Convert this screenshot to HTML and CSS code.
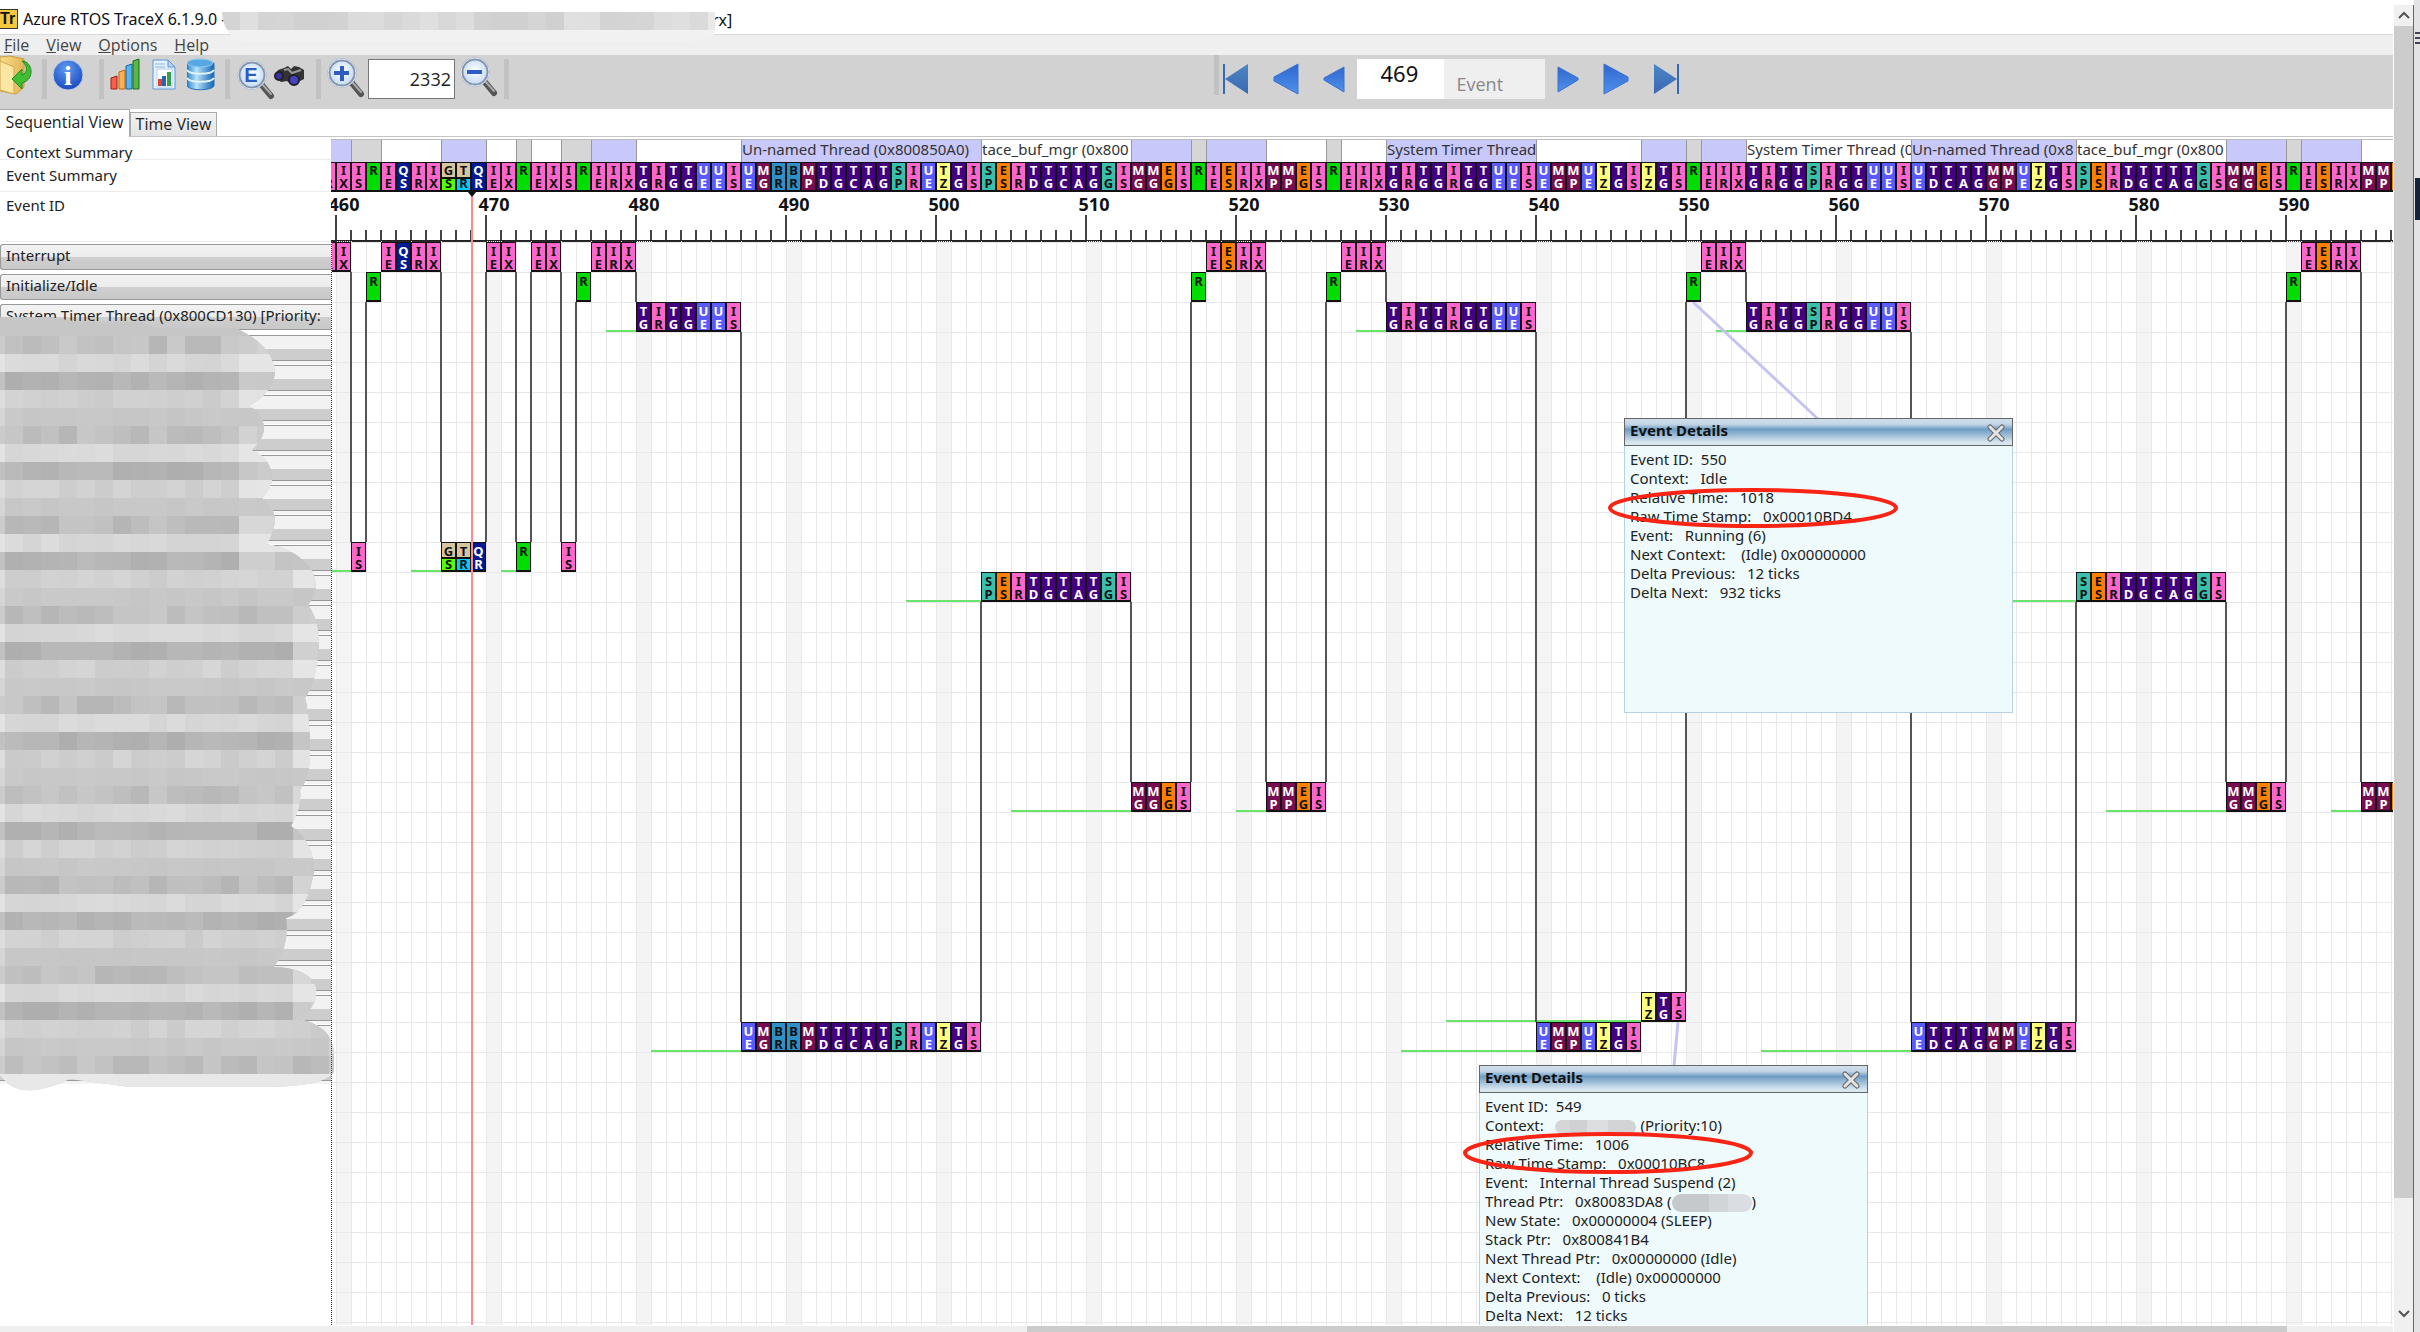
FILE: index.html
```html
<!DOCTYPE html>
<html lang="en">
<head>
<meta charset="utf-8">
<title>Azure RTOS TraceX 6.1.9.0</title>
<link rel="stylesheet" href="styles.css">
</head>
<body>
<svg class="defs" aria-hidden="true">
  <defs>
    <linearGradient id="blue" x1="0" y1="0" x2="0" y2="1"><stop offset="0" stop-color="#2f66cf"/><stop offset="1" stop-color="#4f92ea"/></linearGradient>
    <linearGradient id="steel" x1="0" y1="0" x2="0" y2="1"><stop offset="0" stop-color="#4a86c4"/><stop offset="1" stop-color="#3c68b4"/></linearGradient>
    <linearGradient id="db" x1="0" x2="1"><stop offset="0" stop-color="#2f86cf"/><stop offset=".35" stop-color="#b4e2fb"/><stop offset="1" stop-color="#1464b4"/></linearGradient>
    <linearGradient id="folder" x1="0" x2="1"><stop offset="0" stop-color="#f8dc8c"/><stop offset="1" stop-color="#e2b552"/></linearGradient>
    <radialGradient id="lens" cx=".5" cy=".45" r=".6"><stop offset="0" stop-color="#fff"/><stop offset="1" stop-color="#bcd6f4"/></radialGradient>
    <radialGradient id="ball" cx=".45" cy=".3" r=".75"><stop offset="0" stop-color="#5f9cf0"/><stop offset="1" stop-color="#1444bc"/></radialGradient>
    <symbol id="glass" viewBox="0 0 40 42">
      <path d="M25 25 L35 37" stroke="#555" stroke-width="6" stroke-linecap="round"/>
      <path d="M26 25 L35 35" stroke="#aaa" stroke-width="2" stroke-linecap="round"/>
      <circle cx="16" cy="16" r="13" fill="url(#lens)" stroke="#8494ac" stroke-width="3"/>
      <circle cx="16" cy="16" r="14" fill="none" stroke="#dfe8f4" stroke-width="1"/>
    </symbol>
    <symbol id="cross" viewBox="0 0 18 18">
      <path d="M3 3 L15 15 M15 3 L3 15" stroke="#666" stroke-width="5" stroke-linecap="round"/>
      <path d="M3 3 L15 15 M15 3 L3 15" stroke="#e4e4e4" stroke-width="3" stroke-linecap="round"/>
    </symbol>
  </defs>
</svg>
<div class="window">
  <main class="app">
    <header class="titlebar">
      <span class="logo">Tr</span>
      <span>Azure RTOS TraceX 6.1.9.0 -</span>
      <svg class="title-mask" width="493" height="30" id="titleMask"></svg>
      <span class="title-end">rx]</span>
    </header>
    <nav class="menu">
      <a href="#"><u>F</u>ile</a><a href="#"><u>V</u>iew</a><a href="#"><u>O</u>ptions</a><a href="#"><u>H</u>elp</a>
    </nav>
    <div class="toolbar">
      <div class="tools">
        <button class="tool w36"><svg width="36" height="42" viewBox="0 0 36 42"><path d="M0 2l10-1 14 3v28l-8 7-16-3z" fill="url(#folder)" stroke="#c79a3c"/><path d="M0 6l14 6v27L0 35z" fill="#fbe6a4" stroke="#d2a848"/><path d="M22 6C32 6 36 24 22 28v6L12 24l10-10v6c6-2 6-9 0-14z" fill="#3fbe34" stroke="#1f8a20"/></svg></button>
        <i class="sep"></i>
        <button class="tool w40"><svg width="32" height="42" viewBox="0 0 32 42"><circle cx="15" cy="20" r="15" fill="url(#ball)" stroke="#bccdf0"/><text x="15" y="30" text-anchor="middle" class="info-i">i</text></svg></button>
        <i class="sep"></i>
        <button class="tool w36"><svg width="32" height="42" viewBox="0 0 32 42"><path d="M1 23l6-2v13H1z" fill="#f4604c" stroke="#a81c14"/><path d="M9 17l6-2v19H9z" fill="#f8b050" stroke="#b86a10"/><path d="M16 11l6-2v25h-6z" fill="#5cb4ec" stroke="#1464a4"/><path d="M23 6l6-2v30h-6z" fill="#58b848" stroke="#1a6a1c"/></svg></button>
        <button class="tool w29"><svg width="24" height="42" viewBox="0 0 24 42"><path d="M1 5h15l7 7v22H1z" fill="#e4f0fc" stroke="#5c96dc"/><path d="M16 5v7h7z" fill="#b4d2f4" stroke="#5c96dc"/><path d="M3 9h10M3 12h10" stroke="#8cb8ec"/><path d="M5 14h15v18H5z" fill="#fff" stroke="#b4d0f0"/><path d="M6 24h4v7H6z" fill="#e04430"/><path d="M10 21h4v10h-4z" fill="#2464b4"/><path d="M15 17h4v14h-4z" fill="#3c9c48"/></svg></button>
        <button class="tool w32"><svg width="28" height="42" viewBox="0 0 28 42"><path d="M0 8v23c3 5 24 5 27 0V8z" fill="url(#db)" stroke="#2872b8"/><ellipse cx="13" cy="8" rx="13" ry="4" fill="#58a8e4" stroke="#8ccaf4"/><path d="M0 15c3 5 24 5 27 0M0 23c3 5 24 5 27 0" fill="none" stroke="#e0f2fc" stroke-width="2"/></svg></button>
        <i class="sep"></i>
        <button class="tool w32"><svg width="40" height="46" viewBox="0 0 40 46"><use href="#glass" y="4" width="40" height="42"/><text x="15" y="27" text-anchor="middle" class="lens-e">E</text></svg></button>
        <button class="tool w36"><svg width="32" height="42" viewBox="0 0 32 42"><path d="M10 13l4-2 3 3 3-3 5 1 5 3v9l-6 3-4 4-7-5-6 1-6-5 3-7z" fill="#333"/><path d="M10 15l4-1 4 4 9-3" stroke="#999" stroke-width="2" fill="none"/><circle cx="5" cy="21" r="4" fill="#3a30a8" stroke="#222" stroke-width="2"/><circle cx="20" cy="25" r="5" fill="#4a40c8" stroke="#222" stroke-width="2"/></svg></button>
        <i class="sep"></i>
        <button class="tool w35"><svg width="40" height="44" viewBox="0 0 40 44"><use href="#glass" y="2" x="-1" width="40" height="42"/><path d="M13 11h4v5h5v4h-5v6h-4v-6H7v-4h6z" fill="#2c5cc4"/></svg></button>
        <input class="zoom-box" value="2332" aria-label="2332">
        <button class="tool w37"><svg width="40" height="42" viewBox="0 0 40 42"><use href="#glass" y="1" x="-2" width="40" height="42"/><path d="M6 15h15v4H6z" fill="#2c5cc4"/></svg></button>
        <i class="sep"></i>
      </div>
      <div class="seek">
        <i class="sep"></i>
        <div class="arrows">
          <button><svg width="27" height="32" viewBox="0 0 27 32"><path d="M2 1v30" stroke="#3468b8" stroke-width="2"/><path d="M26 1v30L3 16z" fill="url(#steel)"/></svg></button>
          <button><svg width="26" height="32" viewBox="0 0 26 32"><path d="M25 1v30L1 18v-4z" fill="url(#blue)" stroke="#3c70d0"/></svg></button>
          <button><svg width="22" height="32" viewBox="0 0 22 32"><path d="M21 4v25L1 17v-2z" fill="url(#blue)" stroke="#3c70d0"/></svg></button>
        </div>
        <input class="event-box" id="ev" value="469"><label class="event-label" for="ev">Event</label>
        <div class="arrows">
          <button><svg width="22" height="32" viewBox="0 0 22 32"><path d="M1 4v25l20-12v-2z" fill="url(#blue)" stroke="#3c70d0"/></svg></button>
          <button><svg width="26" height="32" viewBox="0 0 26 32"><path d="M1 1v30l24-13v-4z" fill="url(#blue)" stroke="#3c70d0"/></svg></button>
          <button><svg width="27" height="32" viewBox="0 0 27 32"><path d="M25 1v30" stroke="#3468b8" stroke-width="2"/><path d="M1 1v30l23-15z" fill="url(#steel)"/></svg></button>
        </div>
      </div>
    </div>
    <div class="tabs"><button class="tab active">Sequential View</button><button class="tab">Time View</button></div>
    <div class="view">
      <aside class="side">
        <div class="cap cap-context">Context Summary</div>
        <div class="cap cap-events">Event Summary</div>
        <div class="cap cap-id">Event ID</div>
        <button class="thread">Interrupt</button>
        <button class="thread">Initialize/Idle</button>
        <button class="thread">System Timer Thread (0x800CD130) [Priority:</button>
        <div class="hidden-threads"></div>
        <svg class="mask" id="sideMask" width="340" height="790"></svg>
      </aside>
      <section class="trace">
        <div class="contexts" id="contexts"></div>
        <div class="events" id="summary"></div>
        <div class="ruler" id="ruler"></div>
        <div class="plot">
          <svg class="links" id="links"></svg>
          <div class="runs" id="runs"></div>
          <article class="popup first">
            <header><h2>Event Details</h2><button><svg width="18" height="18"><use href="#cross"/></svg></button></header>
            <p>Event ID:  550</p><p>Context:   Idle</p><p>Relative Time:   1018</p><p>Raw Time Stamp:   0x00010BD4</p><p>Event:   Running (6)</p><p>Next Context:    (Idle) 0x00000000</p><p>Delta Previous:   12 ticks</p><p>Delta Next:   932 ticks</p>
          </article>
          <article class="popup second">
            <header><h2>Event Details</h2><button><svg width="18" height="18"><use href="#cross"/></svg></button></header>
            <p>Event ID:  549</p><p>Context:   <i class="pill"></i> (Priority:10)</p><p>Relative Time:   1006</p><p>Raw Time Stamp:   0x00010BC8</p><p>Event:   Internal Thread Suspend (2)</p><p>Thread Ptr:   0x80083DA8 (<i class="pill tall"></i>)</p><p>New State:   0x00000004 (SLEEP)</p><p>Stack Ptr:   0x800841B4</p><p>Next Thread Ptr:   0x00000000 (Idle)</p><p>Next Context:    (Idle) 0x00000000</p><p>Delta Previous:   0 ticks</p><p>Delta Next:   12 ticks</p>
          </article>
          <svg class="rings"><ellipse cx="1422" cy="266" rx="143" ry="18"/><ellipse cx="1277" cy="911" rx="143" ry="19"/></svg>
        </div>
        <div class="cursor"></div>
      </section>
    </div>
    <div class="hscroll"><i></i></div>
  </main>
  <div class="vscroll">
    <svg width="19" height="21" viewBox="0 0 19 21"><path d="M5 13l5-5 5 5" fill="none" stroke="#555" stroke-width="2"/></svg>
    <i></i>
    <svg width="19" height="21" viewBox="0 0 19 21"><path d="M5 8l5 5 5-5" fill="none" stroke="#555" stroke-width="2"/></svg>
  </div>
  <div class="edge"><i></i><i></i><i></i><b></b></div>
</div>
<script src="trace.js"></script>
</body>
</html>
```
FILE: styles.css
```css
* { box-sizing: border-box; }
body { margin: 0; overflow: hidden; background: #fff; color: #222; font: 16px/20px "Open Sans", "Noto Sans", sans-serif; }
button { border: 0; padding: 0; margin: 0; background: none; color: inherit; font: inherit; }
svg { display: block; }
.defs { position: absolute; width: 0; height: 0; }
.window { display: grid; grid-template-columns: minmax(0, 1fr) 20px 6px; height: 100vh; }
.app { display: flex; flex-direction: column; min-width: 0; min-height: 0; padding-right: 1px; }

.titlebar { position: relative; display: flex; align-items: center; height: 34px; padding-top: 4px; color: #111; white-space: pre; font-family: "Noto Sans", sans-serif; flex: none; }
.logo { width: 18px; height: 20px; margin-right: 5px; overflow: hidden; background: #f4c83c; border: 1px solid #333; border-left: 0; color: #111; font: bold 16px/18px "Liberation Sans", sans-serif; }
.title-mask { position: absolute; left: 222px; top: 12px; z-index: 1; }
.title-end { position: absolute; left: 712px; top: 10px; }
.menu { display: flex; gap: 17px; height: 21px; padding-left: 4px; background: #efefef; border-top: 1px solid #d8d8d8; flex: none; }
.menu a { color: #444; text-decoration: none; }
.toolbar { display: flex; height: 54px; background: #d2d2d2; flex: none; }
.tools { display: flex; gap: 6px; width: calc(50% + 17px); }
.tool { height: 46px; overflow: visible; display: flex; align-items: flex-start; flex: none; }
.tool svg { flex: none; }
.info-i { fill: #fff; font: bold 28px "Liberation Serif", serif; }
.lens-e { fill: #2c5cc4; font: bold 20px "Liberation Sans", sans-serif; }
.w29 { width: 29px; } .w32 { width: 32px; } .w35 { width: 35px; } .w36 { width: 36px; } .w37 { width: 37px; } .w40 { width: 40px; }
.sep { width: 5px; height: 40px; margin-top: 4px; background: #c2c2c2; flex: none; }
.zoom-box { width: 87px; height: 40px; margin-top: 4px; padding: 0 3px; border: 1px solid #777; text-align: right; font: 18px "Open Sans", sans-serif; color: #222; flex: none; }
.seek { display: flex; }
.seek .sep { margin: 0 3px 0 0; }
.arrows { display: flex; gap: 24px; padding-top: 8px; align-items: flex-start; }
.event-box { width: 87px; height: 40px; margin: 4px 0 0 12px; padding: 0 0 12px 24px; border: 0; font: 22px "Noto Sans", sans-serif; color: #111; }
.event-label { width: 101px; height: 40px; margin: 4px 12px 0 0; padding: 13px 0 0 13px; background: #efefef; color: #888; font-size: 18px; line-height: 24px; }

.tabs { display: flex; align-items: flex-end; height: 28px; border-bottom: 1px solid #c4c4c4; flex: none; }
.tab { width: 87px; height: 24px; padding-bottom: 2px; background: linear-gradient(#f2f2f2, #e4e4e4); border: 1px solid #aaa; border-bottom: 0; }
.tab.active { width: 130px; height: 28px; margin-bottom: -1px; padding-bottom: 4px; background: #fff; border-left: 0; }

.view { display: flex; flex: 1; min-height: 0; overflow: hidden; font: 15px/20px "Noto Sans", sans-serif; }
.side { position: relative; width: 331px; flex: none; }
.cap { padding-left: 6px; border-bottom: 1px solid #ececec; }
.cap-context { height: 23px; padding-top: 5px; }
.cap-events { height: 32px; padding-top: 5px; }
.cap-id { height: 50px; padding-top: 3px; }
.thread { display: block; width: 331px; height: 26px; margin: 2px 0 4px; padding: 0 0 4px 5px; text-align: left; white-space: nowrap; border: 1px solid #999; border-right: 0; border-radius: 3px 0 0 3px; background: linear-gradient(#f2f2f2, #ececec 50%, #cfcfcf 52%, #c8c8c8); line-height: 20px; }
.hidden-threads { height: 750px; background: repeating-linear-gradient(#fff 0 1px, #999 1px 2px, #f2f2f2 2px 15px, #cdcdcd 15px 26px, #999 26px 27px, #f4f4f4 27px 30px); }
.mask { position: absolute; left: 0; top: 179px; }

.trace { position: relative; display: flex; flex-direction: column; flex: 1; min-width: 0; overflow: hidden; }
.contexts { display: flex; height: 23px; margin: 2px 0 0 -10px; flex: none; border-top: 1px solid #bbb; }
.contexts span { border-left: 1px solid #999; white-space: nowrap; line-height: 19px; color: #333; flex: none; overflow: hidden; }
.lav { background: #c8c8fa; } .gray { background: #d6d6d7; } .none { background: #fff; }
.events { display: flex; height: 30px; margin-left: -10px; flex: none; }
.ev { display: flex; flex-direction: column; width: 15px; height: 30px; border: 1px solid #111; border-width: 1px 1px 2px 1px; background: #ff66cc; color: #111; font: bold 13px/13px "Noto Sans", sans-serif; text-align: center; flex: none; padding-top: 1px; }
.runs .ev { padding-top: 2px; }
.k-green { background: #00dd00; } .k-navy { background: #001a94; color: #fff; } .k-purple { background: #430080; color: #fff; }
.k-blue { background: #5a5aff; color: #fff; } .k-maroon { background: #780c50; color: #fff; } .k-sky { background: #2f90c8; }
.k-teal { background: #3abfac; } .k-orange { background: #ff8000; } .k-yellow { background: #ffff80; }
.k-lime { background: linear-gradient(#d6c6a0 14px, #111 14px 16px, #55ff00 16px); } .k-cyan { background: linear-gradient(#d6c6a0 14px, #111 14px 16px, #00ccff 16px); }
.ruler { display: flex; height: 50px; flex: none; color: #111; font: bold 18px/24px "Noto Sans", sans-serif;
  background: linear-gradient(#222 0 0) 0 100% / 100% 2px no-repeat,
    linear-gradient(90deg, #444 2px, transparent 2px) 4px 100% / 15px 12px repeat-x,
    linear-gradient(90deg, #444 2px, transparent 2px) 4px 100% / 150px 27px repeat-x; }
.ruler span { width: 150px; flex: none; text-align: center; }
.ruler span:first-child { margin-left: -62px; }
.plot { position: relative; flex: 1; min-height: 0; border-left: 1px dotted #333; border-top: 1px dotted #333; overflow: hidden; margin-top: -1px;
  background: linear-gradient(transparent 29px, #e8e8eb 29px) 0 1px / 100% 30px,
    linear-gradient(90deg, #e8e8eb 1px, transparent 1px) 4px 0 / 15px 100%,
    linear-gradient(90deg, #f4f4f4 15px, transparent 15px) 4px 0 / 150px 100%; }
.links, .rings { position: absolute; left: -1px; top: 0; width: 100%; height: 100%; overflow: visible; fill: none; }
.rings { stroke: #fa2414; stroke-width: 4px; }
.runs { position: relative; display: grid; grid-template-columns: repeat(139, 15px); grid-auto-rows: 30px; margin-left: -11px; }
.cursor { position: absolute; left: 140px; top: 55px; bottom: 0; width: 2px; background: #ff8c8c; }
.cursor::before { content: ""; position: absolute; left: -4px; top: -1px; border: 5px solid transparent; border-top: 6px solid #111; border-bottom: 0; }
.popup { position: absolute; width: 389px; padding: 0 5px; background: #eefafc; border: 1px solid #b8d0e4; color: #222; }
.popup.first { left: 1292px; top: 176px; height: 295px; }
.popup.second { left: 1147px; top: 823px; height: 295px; }
.popup header { display: flex; justify-content: space-between; height: 28px; margin: -1px -6px 4px; padding: 1px 7px 0 5px; border: 1px solid #666; background: linear-gradient(#cfdeea, #c4d6e6 20%, #6e9cc4 40%, #d8e6f0 90%); }
.popup h2 { margin: 0; font: bold 15px/20px "Noto Sans", sans-serif; color: #111; }
.popup button { margin-top: 4px; align-self: flex-start; }
.popup p { margin: 0; line-height: 19px; white-space: pre; }
.pill { display: inline-block; width: 81px; height: 14px; border-radius: 7px; vertical-align: middle; background: linear-gradient(90deg, #d4d6d8 18%, #cfd1d3 18% 40%, #dcdee0 40% 65%, #d2d4d6 65%); }
.pill.tall { width: 80px; height: 18px; margin: -2px 0; border-radius: 9px; background: linear-gradient(90deg, #c6c9cb 46%, #d2d5d8 46% 70%, #dadde1 70%); }

.hscroll { display: grid; grid-template-columns: 1027fr 1260fr 106fr; height: 6px; background: #efefef; flex: none; margin-top: 1px; }
.hscroll i { grid-column: 2; background: #ccc; }
.vscroll { display: flex; flex-direction: column; margin-top: 5px; background: #f0f0f0; border-right: 1px solid #666; }
.vscroll i { height: calc(88% + 4px); background: #ccc; }
.vscroll svg:last-child { margin-top: auto; margin-bottom: 8px; }
.edge { padding: 32px 0 0 1px; background: #e3e3e6; }
.edge i { display: block; height: 2px; margin-bottom: 3px; background: #445; }
.edge b { display: block; height: 42px; margin-top: 134px; background: #12233a; }
```
FILE: trace.js
```js
const FIRST = 459, CELL = 15, ROW = 30, X0 = -10;
// Runs of consecutive events: [row, event codes]
const RUNS = [
  [0, 'IR IX'], [10, 'IS'], [1, 'R'], [0, 'IE QS IR IX'], [10, 'GS TR QR'], [0, 'IE IX'], [10, 'R'], [0, 'IE IX'],
  [10, 'IS'], [1, 'R'], [0, 'IE IR IX'], [2, 'TG IR TG TG UE UE IS'],
  [26, 'UE MG BR BR MP TD TG TC TA TG SP IR UE TZ TG IS'], [11, 'SP ES IR TD TG TC TA TG SG IS'],
  [18, 'MG MG EG IS'], [1, 'R'], [0, 'IE ES IR IX'], [18, 'MP MP EG IS'], [1, 'R'], [0, 'IE IR IX'],
  [2, 'TG IR TG TG IR TG TG UE UE IS'], [26, 'UE MG MP UE TZ TG IS'], [25, 'TZ TG IS'], [1, 'R'], [0, 'IE IR IX'],
  [2, 'TG IR TG TG SP IR TG TG UE UE IS'], [26, 'UE TD TC TA TG MG MP UE TZ TG IS'],
  [11, 'SP ES IR TD TG TC TA TG SG IS'], [18, 'MG MG EG IS'], [1, 'R'], [0, 'IE ES IR IX'], [18, 'MP MP EG']
];
// Ready periods: [row, first event, last event]
const READY = [[10, 459, 461], [10, 465, 467], [10, 471, 472], [2, 478, 480], [26, 481, 487], [11, 498, 503], [18, 505, 513],
  [18, 520, 522], [2, 528, 530], [26, 531, 540], [25, 534, 547], [2, 552, 554], [26, 555, 565], [11, 569, 576],
  [18, 578, 586], [18, 593, 595]];
const CONTEXTS = [[2, 'lav'], [2, 'gray'], [4, 'none'], [3, 'lav'], [2, 'none'], [1, 'gray'], [2, 'none'], [2, 'gray'], [3, 'lav'],
  [7, 'none'], [16, 'lav', 'Un-named Thread (0x800850A0)'], [10, 'none', 'tace_buf_mgr (0x800'], [4, 'lav'], [1, 'gray'],
  [4, 'lav'], [4, 'none'], [1, 'gray'], [3, 'none'], [10, 'lav', 'System Timer Thread'], [7, 'none'], [3, 'lav'], [1, 'gray'],
  [3, 'lav'], [11, 'none', 'System Timer Thread (0'], [11, 'lav', 'Un-named Thread (0x8'], [10, 'none', 'tace_buf_mgr (0x800'],
  [4, 'lav'], [1, 'gray'], [4, 'lav'], [3, 'none']];
const KIND = { R: 'green', QS: 'navy', QR: 'navy', GS: 'lime', TR: 'cyan', TZ: 'yellow', BR: 'sky', SP: 'teal', SG: 'teal',
  ES: 'orange', EG: 'orange', UE: 'blue', MG: 'maroon', MP: 'maroon', TG: 'purple', TD: 'purple', TC: 'purple', TA: 'purple' };
const byId = id => document.getElementById(id);
const xOf = n => X0 + (n - FIRST) * CELL;

function cell(code) {
  const el = document.createElement('div');
  el.className = 'ev k-' + (KIND[code] || 'pink');
  for (const ch of code) {
    const s = document.createElement('span');
    s.textContent = ch;
    el.append(s);
  }
  return el;
}

let n = FIRST, prev = null, lines = '';
for (const [row, a, b] of READY)
  lines += `<path d="M${xOf(a)} ${row * ROW + 29}H${xOf(b)}" stroke="#6be46b" stroke-width="2"/>`;
for (const [row, codes] of RUNS) {
  if (prev !== null) {
    const top = Math.min(prev, row) + 1, bottom = Math.max(prev, row);
    if (bottom > top) lines += `<path d="M${xOf(n)} ${top * ROW}V${bottom * ROW}" stroke="#555" stroke-width="2"/>`;
  }
  prev = row;
  for (const code of codes.split(' ')) {
    byId('summary').append(cell(code));
    const c = cell(code);
    c.style.gridArea = `${row + 1} / ${n - FIRST + 1}`;
    byId('runs').append(c);
    n++;
  }
}
lines += '<path d="M1362 60L1487 177M1347 780L1343 824" stroke="#c4c4f2" stroke-width="3"/>';
byId('links').innerHTML = lines;

for (const [count, cls, text] of CONTEXTS) {
  const s = document.createElement('span');
  s.className = cls;
  s.style.width = count * CELL + 'px';
  s.textContent = text || '';
  byId('contexts').append(s);
}
for (let t = 460; t <= 590; t += 10) {
  const s = document.createElement('span');
  s.textContent = t;
  byId('ruler').append(s);
}

// Mosaic covers over private names
let seed = 7;
const rnd = () => (seed = (seed * 1103515245 + 12345) % 2147483648) / 2147483648;
const shade = v => { v = Math.round(v); return `rgb(${v},${v + 1},${v})`; };
const base = [188, 214, 178, 206, 198], spread = [20, 8, 14, 12, 4];
let m = '<clipPath id="blob"><path d="M0 1H50L80 6H140L155 12H236Q274 30 275 58Q270 80 248 90Q264 96 264 114Q262 126 251 134Q272 142 272 164Q270 174 262 182Q275 192 275 206Q272 220 267 228Q290 232 304 245Q320 260 314 280L308 289Q319 304 319 329Q316 368 305 382Q310 400 310 444Q308 464 300 474Q302 490 291 510Q314 526 314 554Q308 596 286 602Q290 630 274 651Q310 652 316 672Q318 698 290 702Q334 706 334 740V756Q325 770 270 771H130L70 763Q30 782 10 769L0 760Z"/></clipPath><g clip-path="url(#blob)"><rect width="340" height="790" fill="#c6c6c6"/><rect y="758" width="340" height="30" fill="#e8e8e8"/>';
for (let r = 0; r < 41; r++) {
  const b = base[r % 5];
  m += `<rect y="${20 + r * 18}" width="340" height="18" fill="${shade(Math.min(226, b + 14))}"/>`;
  for (let c = 0; c < 18; c++) {
    const edge = c > (r < 13 ? 12 : 15) && r < 38 ? 22 : 0;
    const v = Math.min(228, b + (rnd() - .4) * spread[r % 5] + (edge && r % 5 !== 4 ? edge : 0));
    m += `<rect x="${5 + c * 18}" y="${20 + r * 18}" width="18" height="18" fill="${shade(v)}"/>`;
  }
}
byId('sideMask').innerHTML = m + '</g>';

let t = '<clipPath id="tb"><path d="M0 0H493V20Q492 30 460 30H20Q2 24 0 0Z"/></clipPath><g clip-path="url(#tb)"><rect width="493" height="30" fill="#f1f1f1"/>';
for (let c = 0; c < 28; c++) t += `<rect x="${c * 18}" width="18" height="18" fill="${shade(c === 27 ? 232 : 206 + rnd() * 18)}"/>`;
byId('titleMask').innerHTML = t + '</g>';
```
